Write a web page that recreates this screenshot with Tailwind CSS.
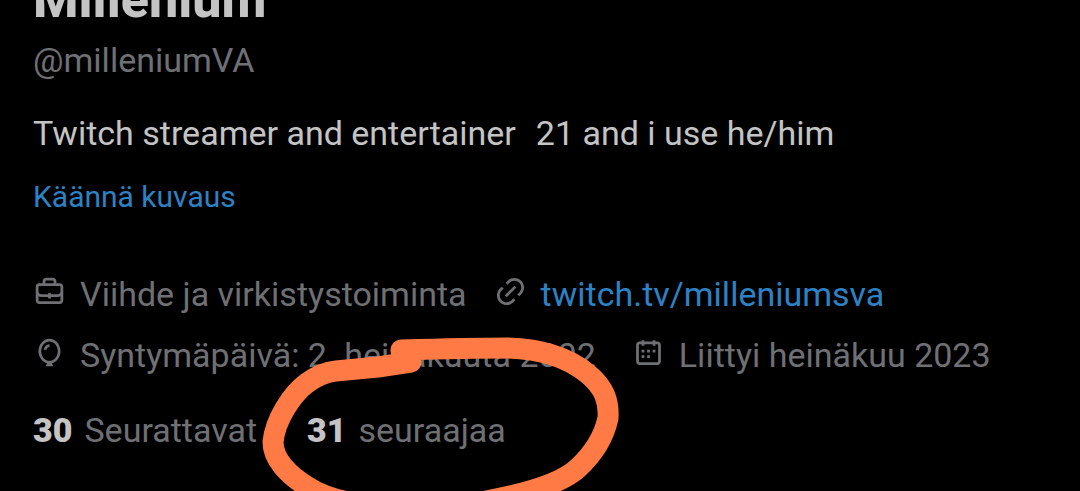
<!DOCTYPE html>
<html lang="fi">

<head>
    <meta charset="UTF-8">
    <meta name="viewport" content="width=device-width, initial-scale=1.0">
    <script src="https://cdn.jsdelivr.net/npm/@tailwindcss/browser@4"></script>
    <title>Millenium (@milleniumVA)</title>
</head>

<body class="relative min-h-screen overflow-hidden bg-black font-['Roboto',sans-serif] text-[34px] leading-[60px] text-[#6e7074]">
    <!-- Profile -->
    <main class="px-[33px]">
        <header>
            <h1 class="-mt-[30px] text-[52px] font-extrabold text-[#c4c4c4]">Millenium</h1>
            <p>@milleniumVA</p>
        </header>

        <p class="mt-[13px] flex gap-[20px] text-[#c4c4c4]">
            <span>Twitch streamer and entertainer</span>
            <span>21 and i use he/him</span>
        </p>
        <button type="button" class="mt-[4px] block text-[30px] text-[#2d82c4]">Käännä kuvaus</button>

        <!-- Details -->
        <ul class="mt-[37px] flex flex-col gap-px">
            <li class="flex items-center gap-[27px]">
                <span class="flex items-center gap-[14px]">
                    <svg class="-mt-[6px] size-[33px] fill-current" viewBox="0 0 24 24" aria-hidden="true">
                        <path d="M19.5 6H17V4.5C17 3.12 15.88 2 14.5 2h-5C8.12 2 7 3.12 7 4.5V6H4.5C3.12 6 2 7.12 2 8.5v10C2 19.88 3.12 21 4.5 21h15c1.38 0 2.5-1.12 2.5-2.5v-10C22 7.12 20.88 6 19.5 6zM9 4.5c0-.28.23-.5.5-.5h5c.28 0 .5.22.5.5V6H9V4.5zm11 14c0 .28-.22.5-.5.5h-15c-.27 0-.5-.22-.5-.5v-3.04c.59.35 1.27.54 2 .54h5v1h2v-1h5c.73 0 1.41-.19 2-.54v3.04zm0-6.49c0 1.1-.9 1.99-2 1.99h-5v-1h-2v1H6c-1.1 0-2-.9-2-2V8.5c0-.28.23-.5.5-.5h15c.28 0 .5.22.5.5v3.51z" />
                    </svg>
                    Viihde ja virkistystoiminta
                </span>
                <span class="flex items-center gap-[14px]">
                    <svg class="-mt-[6px] size-[33px] fill-current" viewBox="0 0 24 24" aria-hidden="true">
                        <path d="M18.36 5.64c-1.95-1.96-5.11-1.96-7.07 0L9.88 7.05 8.46 5.64l1.42-1.42c2.73-2.73 7.16-2.73 9.9 0 2.73 2.74 2.73 7.17 0 9.9l-1.42 1.42-1.41-1.42 1.41-1.41c1.96-1.96 1.96-5.12 0-7.07zm-2.12 3.53l-7.07 7.07-1.41-1.41 7.07-7.07 1.41 1.41zm-12.02.71l1.42-1.42 1.41 1.42-1.41 1.41c-1.96 1.96-1.96 5.12 0 7.07 1.95 1.96 5.11 1.96 7.07 0l1.41-1.41 1.42 1.41-1.42 1.42c-2.73 2.73-7.16 2.73-9.9 0-2.73-2.74-2.73-7.17 0-9.9z" />
                    </svg>
                    <a href="#" class="text-[#2d82c4]">twitch.tv/milleniumsva</a>
                </span>
            </li>
            <li class="flex items-center gap-[36px]">
                <span class="flex items-center gap-[14px]">
                    <svg class="-mt-[6px] size-[33px] fill-current" viewBox="0 0 24 24" aria-hidden="true">
                        <path d="M8 10c0-2.21 1.79-4 4-4v2c-1.1 0-2 .9-2 2H8zm12 1c0 4.27-2.69 8.01-6.44 8.83L15 22H9l1.45-2.17C6.7 19.01 4 15.27 4 11c0-4.84 3.46-9 8-9s8 4.16 8 9zm-8 7c3.19 0 6-3 6-7s-2.81-7-6-7-6 3-6 7 2.81 7 6 7z" />
                    </svg>
                    Syntymäpäivä: 2. heinäkuuta 2002
                </span>
                <span class="flex items-center gap-[14px]">
                    <svg class="-mt-[6px] size-[33px] fill-current" viewBox="0 0 24 24" aria-hidden="true">
                        <path d="M7 4V3h2v1h6V3h2v1h1.5C19.89 4 21 5.12 21 6.5v12c0 1.38-1.11 2.5-2.5 2.5h-13C4.12 21 3 19.88 3 18.5v-12C3 5.12 4.12 4 5.5 4H7zm0 2H5.5c-.27 0-.5.22-.5.5v12c0 .28.23.5.5.5h13c.28 0 .5-.22.5-.5v-12c0-.28-.22-.5-.5-.5H17v1h-2V6H9v1H7V6zm0 6h2v-2H7v2zm0 4h2v-2H7v2zm4-4h2v-2h-2v2zm0 4h2v-2h-2v2zm4-4h2v-2h-2v2z" />
                    </svg>
                    Liittyi heinäkuu 2023
                </span>
            </li>
        </ul>

        <!-- Follow counts -->
        <nav class="mt-[15px] flex gap-[50px]">
            <a href="#" class="flex gap-[12px]"><strong class="font-black text-[#c4c4c4]">30</strong> Seurattavat</a>
            <a href="#" class="flex gap-[12px]"><strong class="font-black text-[#c4c4c4]">31</strong> seuraajaa</a>
        </nav>
    </main>

    <!-- Marker drawing -->
    <svg class="pointer-events-none absolute left-0 top-0 h-[491px] w-[1080px]" viewBox="0 0 1080 491" fill="none" stroke="#ff7a45" stroke-width="21" stroke-linecap="round" stroke-linejoin="round" aria-hidden="true">
        <path d="M401 350 C435 349 470 348 508 348 C545 349 570 359 588 374 C605 388 609 402 608 418 C604 437 592 455 578 468 C562 483 530 493 486 501 C430 512 345 511 308 487 C288 475 273 459 273 442 C275 420 292 394 307 383 C318 375 326 372 336 371 L378 367 L411 362 L401 351" />
    </svg>
</body>

</html>
